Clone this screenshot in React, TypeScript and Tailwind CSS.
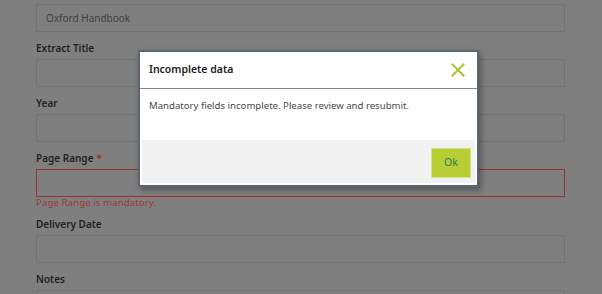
import React from "react";

const font = { fontFamily: '"Noto Sans", "Open Sans", sans-serif' };

function Field({ label, required, value, error }: { label?: string; required?: boolean; value?: string; error?: string }) {
  return (
    <div className="flex flex-col">
      {label && (
        <div className="pt-[9px] mb-[4px] h-[23px] leading-[14px] text-[10px] font-semibold text-[#1f1f1f]">
          {label}
          {required && <span className="text-[#9e2a2a] ml-[3px]">*</span>}
        </div>
      )}
      <div
        className={`h-[28px] border flex items-center px-[9px] text-[10px] text-[#3f3f3f] ${
          error ? "border-[#9a3030]" : "border-[#737373]"
        }`}
      >
        {value}
      </div>
      {error && <div className="h-[11px] leading-[12px] text-[9.8px] text-[#9a3c36]">{error}</div>}
    </div>
  );
}

export default function App() {
  return (
    <div className="relative w-[602px] h-[294px] overflow-hidden bg-[#7f7f7f]" style={font}>
      <div className="ml-[36px] w-[529px] pt-[4px] flex flex-col">
        <Field value="Oxford Handbook" />
        <Field label="Extract Title" />
        <Field label="Year" />
        <Field label="Page Range" required error="Page Range is mandatory." />
        <Field label="Delivery Date" />
        <Field label="Notes" />
      </div>

      <div className="absolute left-[138px] top-[50px] w-[341px] h-[137px] bg-white border-2 border-[#5b6570] shadow-[2px_3px_6px_rgba(0,0,0,0.35)] flex flex-col">
        <div className="h-[37px] shrink-0 flex items-center justify-between pl-[9px] pr-[12px] border-b border-[#7d8b99]">
          <span className="text-[10.5px] font-semibold text-[#222]">Incomplete data</span>
          <svg width="14" height="14" viewBox="0 0 14 14">
            <path d="M1.5 1.5 L12.5 12.5 M12.5 1.5 L1.5 12.5" stroke="#a9c62a" strokeWidth="2" strokeLinecap="square" />
          </svg>
        </div>
        <div className="h-[51px] shrink-0 pl-[9px] pt-[10px] text-[9.6px] leading-[14px] text-[#4a4a4a]">
          Mandatory fields incomplete. Please review and resubmit.
        </div>
        <div className="mx-[2px] mb-[2px] flex-1 bg-[#f1f1f1] flex justify-end items-start pt-[8px] pr-[4px]">
          <button className="w-[40px] h-[30px] bg-[#b7cf35] border border-[#d4e48a] text-[10.5px] text-[#2e7d5e]">
            Ok
          </button>
        </div>
      </div>
    </div>
  );
}
